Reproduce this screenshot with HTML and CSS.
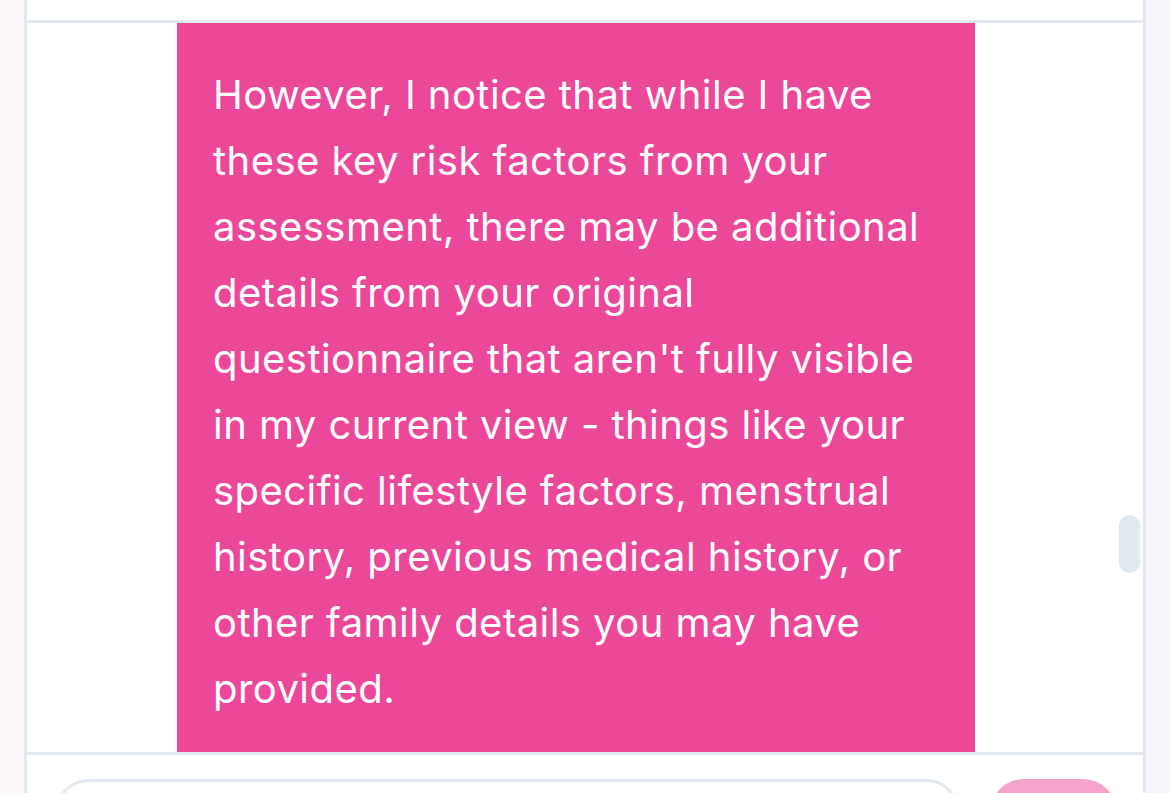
FILE: index.html
```html
<!DOCTYPE html>
<html lang="en">
<head>
<meta charset="utf-8">
<title>Chat</title>
<link rel="stylesheet" href="styles.css">
</head>
<body>
<div class="card">
  <div class="card-header"></div>
  <div class="messages">
    <div class="bubble">
      <p class="bubble-text">However, I notice that while I have these key risk factors from your assessment, there may be additional details from your original questionnaire that aren't fully visible in my current view - things like your specific lifestyle factors, menstrual history, previous medical history, or other family details you may have provided.</p>
    </div>
    <div class="scroll-thumb"></div>
  </div>
  <div class="composer">
    <div class="input-box"></div>
    <div class="send-btn"></div>
  </div>
</div>
</body>
</html>
```
FILE: styles.css
```css
html, body {
  margin: 0;
  padding: 0;
  height: 100%;
  overflow: hidden;
}
body {
  background: linear-gradient(90deg, #fdf7fa 0%, #faf6fb 50%, #f8f5fd 100%);
  font-family: Inter, "Noto Sans", sans-serif;
}
.card {
  margin-left: 24px;
  width: 1122px;
  box-sizing: border-box;
  background: #ffffff;
  border-left: 3px solid #e2e8f0;
  border-right: 3px solid #e2e8f0;
  height: 793px;
  overflow: hidden;
}
.card-header {
  height: 20px;
  border-bottom: 3px solid #e2e8f0;
}
.messages {
  position: relative;
  height: 729px;
  overflow: hidden;
}
.bubble {
  margin-left: 150px;
  width: 798px;
  box-sizing: border-box;
  background: #ec4899;
  padding: 39px 36px 30px 36px;
  height: 729px;
}
.bubble-text {
  margin: 0;
  color: #ffffff;
  font-size: 40px;
  line-height: 66px;
  letter-spacing: 0.45px;
  font-weight: 400;
}
.scroll-thumb {
  position: absolute;
  right: 3px;
  top: 492px;
  width: 21px;
  height: 58px;
  border-radius: 11px;
  background: #e2e8f0;
}
.composer {
  border-top: 3px solid #e2e8f0;
  display: flex;
  gap: 30px;
  padding: 24px 26px 0 28px;
  height: 38px;
  overflow: hidden;
}
.input-box {
  flex: 0 0 905px;
  height: 72px;
  box-sizing: border-box;
  border: 3px solid #e2e8f0;
  border-radius: 34px;
  background: #ffffff;
}
.send-btn {
  flex: 0 0 127px;
  height: 72px;
  border-radius: 34px;
  background: #f5a3cc;
}
```
